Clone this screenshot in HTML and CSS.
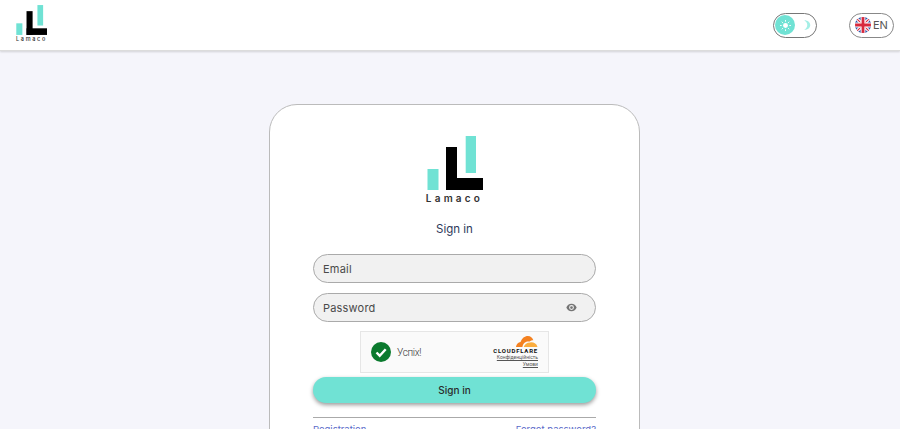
FILE: index.html
```html
<!DOCTYPE html>
<html lang="en">

    <head>
        <meta charset="UTF-8" />
        <meta name="viewport" content="width=device-width, initial-scale=1.0" />
        <title>Lamaco</title>
        <link rel="stylesheet" href="styles.css">
    </head>

    <body>
        <header class="topbar">
            <div class="logo logo-small">
                <svg class="logo-mark" viewBox="0 0 56 54" aria-hidden="true">
                    <rect x="0.5" y="33" width="11" height="21" fill="#70e2d4" />
                    <rect x="19" y="11" width="11" height="43" fill="#000" />
                    <rect x="19" y="42" width="37" height="12" fill="#000" />
                    <rect x="38.7" y="0" width="10.3" height="37" fill="#70e2d4" />
                </svg>
                <span class="logo-name">Lamaco</span>
            </div>
            <div class="topbar-actions">
                <div class="theme-toggle">
                    <span class="theme-knob">
                        <svg viewBox="0 0 16 16" width="11" height="11" aria-hidden="true">
                            <circle cx="8" cy="8" r="3.6" fill="#fff" />
                            <path d="M8 0v2.500M8 13.500v2.500M0 8h2.500M13.500 8h2.500M2.500 2.500l1.800 1.800M11.700 11.700l1.800 1.800M2.500 13.500l1.800-1.800M11.700 4.300l1.800-1.800" stroke="#fff" stroke-width="1.300" />
                        </svg>
                    </span>
                    <svg class="theme-moon" viewBox="0 0 12 14" width="9" height="12" aria-hidden="true">
                        <path d="M3 0.500C8 0.500 11 3.500 11 7s-3 6.500-8 6.500C6 11.500 7 9.500 7 7S6 2.500 3 0.500z" fill="#a4efe6" />
                    </svg>
                </div>
                <div class="lang-switch">
                    <svg class="flag" viewBox="0 0 16 16" width="16" height="16" aria-hidden="true">
                        <clipPath id="flag-clip"><circle cx="8" cy="8" r="8" /></clipPath>
                        <g clip-path="url(#flag-clip)">
                            <rect width="16" height="16" fill="#2b50a8" />
                            <path d="M0 0l16 16M16 0L0 16" stroke="#fff" stroke-width="3.200" />
                            <path d="M0 0l16 16M16 0L0 16" stroke="#d8283c" stroke-width="1.100" />
                            <path d="M8 0v16M0 8h16" stroke="#fff" stroke-width="4.800" />
                            <path d="M8 0v16M0 8h16" stroke="#d8283c" stroke-width="2.800" />
                        </g>
                    </svg>
                    <span>EN</span>
                </div>
            </div>
        </header>

        <main class="page">
            <section class="card">
                <div class="logo logo-large">
                    <svg class="logo-mark" viewBox="0 0 56 54" aria-hidden="true">
                        <rect x="0.5" y="33" width="11" height="21" fill="#70e2d4" />
                        <rect x="19" y="11" width="11" height="43" fill="#000" />
                        <rect x="19" y="42" width="37" height="12" fill="#000" />
                        <rect x="38.7" y="0" width="10.3" height="37" fill="#70e2d4" />
                    </svg>
                    <span class="logo-name">Lamaco</span>
                </div>

                <h1 class="card-title">Sign in</h1>

                <div class="field">Email</div>
                <div class="field">
                    <span>Password</span>
                    <svg class="eye" viewBox="0 0 16 12" width="11" height="9" aria-hidden="true">
                        <path d="M8 0.500C4.500 0.500 1.700 2.700 0.500 6c1.200 3.300 4 5.500 7.500 5.500s6.300-2.200 7.500-5.500C14.300 2.700 11.500 0.500 8 0.500zM8 9.500a3.500 3.500 0 1 1 0-7 3.500 3.500 0 0 1 0 7zM8 4a2 2 0 1 0 0 4 2 2 0 0 0 0-4z" fill="#757575" />
                    </svg>
                </div>

                <div class="captcha">
                    <svg class="captcha-check" viewBox="0 0 20 20" width="20" height="20" aria-hidden="true">
                        <circle cx="10" cy="10" r="10" fill="#0b7a2e" />
                        <path d="M5.500 10.500l3.200 3.200 6-6.500" fill="none" stroke="#fff" stroke-width="2.400" />
                    </svg>
                    <span class="captcha-text">Успіх!</span>
                    <div class="captcha-brand">
                        <svg viewBox="0 0 24 12" width="23" height="11" aria-hidden="true">
                            <path d="M0.500 12C1 8.500 3 6.800 5.500 6.500 7 2.500 10 0 13.500 0c3 0 5 1.800 6 4.500-1.500 0-3 .5-4 1.500-3.500-.5-7 .5-8 6z" fill="#f48120" />
                            <path d="M9 12c.8-3 3.500-5 7-5 3.500-.5 7 1 8 5z" fill="#faad3f" />
                        </svg>
                        <span class="captcha-name">CLOUDFLARE</span>
                        <span class="captcha-link">Конфіденційність</span>
                        <span class="captcha-link">Умови</span>
                    </div>
                </div>

                <button class="submit" type="button">Sign in</button>

                <div class="card-links">
                    <a href="#">Registration</a>
                    <a href="#">Forgot password?</a>
                </div>
            </section>
        </main>
    </body>

</html>
```

FILE: styles.css
```css
html,
body {
    height: 100%;
    margin: 0;
}

body {
    display: flex;
    flex-direction: column;
    overflow: hidden;
    background: #f5f5fb;
    color: #2c3440;
    font-family: 'Inter', 'Noto Sans', sans-serif;
}

.topbar {
    display: flex;
    flex: none;
    align-items: center;
    justify-content: space-between;
    height: 50px;
    padding: 0 6px 0 16px;
    background: #fff;
    border-bottom: 1px solid #dcdcdc;
    box-shadow: 0 1px 2px rgba(0, 0, 0, 0.15);
}

.topbar-actions {
    display: flex;
    align-items: center;
    gap: 32px;
}

.logo {
    display: flex;
    flex-direction: column;
    align-items: center;
}

.logo-mark {
    display: block;
}

.logo-name {
    color: #333;
    font-weight: 600;
}

.logo-small {
    margin-bottom: 4px;
}

.logo-small .logo-mark {
    width: 31px;
    height: 30px;
}

.logo-small .logo-name {
    margin-top: 1px;
    font-size: 5.500px;
    font-weight: 500;
    line-height: 6px;
    letter-spacing: 1.700px;
}

.logo-large .logo-mark {
    width: 56px;
    height: 54px;
}

.logo-large .logo-name {
    margin-top: 2px;
    font-size: 10px;
    line-height: 12px;
    letter-spacing: 3.200px;
}

.theme-toggle {
    display: flex;
    align-items: center;
    justify-content: space-between;
    box-sizing: border-box;
    width: 44px;
    height: 25px;
    padding: 0 5px 0 1px;
    border: 1px solid #777;
    border-radius: 13px;
}

.theme-knob {
    display: flex;
    align-items: center;
    justify-content: center;
    width: 20px;
    height: 20px;
    background: #70e2d4;
    border-radius: 50%;
}

.lang-switch {
    display: flex;
    align-items: center;
    gap: 2px;
    box-sizing: border-box;
    width: 45px;
    height: 25px;
    padding-left: 5px;
    border: 1px solid #888;
    border-radius: 13px;
    font-size: 11px;
    color: #555;
}

.page {
    display: flex;
    flex: none;
    justify-content: center;
    padding: 53px 0 0 9px;
}

.card {
    display: flex;
    flex-direction: column;
    flex: none;
    box-sizing: border-box;
    width: 371px;
    padding: 31px 43px 30px;
    background: #fff;
    border: 1px solid #bbb;
    border-radius: 28px;
}

.card-title {
    margin: 17px 0 17px;
    font-size: 11.500px;
    font-weight: 400;
    line-height: 16px;
    text-align: center;
    color: #2f3a5a;
}

.field {
    display: flex;
    align-items: center;
    justify-content: space-between;
    box-sizing: border-box;
    height: 29px;
    margin-bottom: 10px;
    padding: 0 18px 0 9px;
    background: #f1f1f1;
    border: 1px solid #aaa;
    border-radius: 15px;
    font-size: 11px;
    letter-spacing: 0.200px;
    color: #4a4a4a;
}

.captcha {
    display: flex;
    align-items: center;
    box-sizing: border-box;
    width: 189px;
    height: 42px;
    margin: -1px auto 4px;
    padding: 0 10px;
    background: #fafafa;
    border: 1px solid #e6e6e6;
    font-family: 'Roboto', sans-serif;
}

.captcha-text {
    margin-left: 6px;
    font-size: 10px;
    font-weight: 300;
    letter-spacing: -0.300px;
    color: #333;
}

.captcha-brand {
    display: flex;
    flex-direction: column;
    align-items: flex-end;
    margin-left: auto;
}

.captcha-name {
    font-size: 6px;
    font-weight: 700;
    line-height: 7px;
    letter-spacing: 0.800px;
    color: #111;
}

.captcha-link {
    font-size: 5px;
    line-height: 7px;
    text-decoration: underline;
    color: #555;
}

.submit {
    flex: none;
    height: 26px;
    padding: 0;
    background: #70e2d4;
    border: none;
    border-radius: 13px;
    box-shadow: 0 2px 4px rgba(0, 0, 0, 0.4);
    font-family: inherit;
    font-size: 10px;
    font-weight: 500;
    color: #2a2a2a;
}

.card-links {
    display: flex;
    justify-content: space-between;
    margin-top: 14px;
    padding-top: 6px;
    border-top: 1px solid #aaa;
    font-size: 9.500px;
}

.card-links a {
    color: #5b6bc9;
    text-decoration: none;
}
```
